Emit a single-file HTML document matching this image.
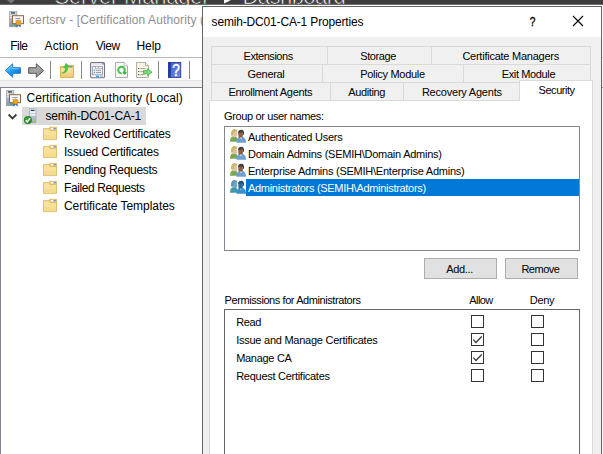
<!DOCTYPE html>
<html>
<head>
<meta charset="utf-8">
<title>semih-DC01-CA-1 Properties</title>
<style>
html,body{margin:0;padding:0;}
body{width:603px;height:454px;overflow:hidden;background:#fff;position:relative;font-family:"Liberation Sans",sans-serif;}
.a{position:absolute;}
.t{position:absolute;white-space:pre;font-family:"Liberation Sans",sans-serif;}
.tab{position:absolute;box-sizing:border-box;border:1px solid #d9d9d9;background:#f0f0f0;height:19px;}
.cb{position:absolute;box-sizing:border-box;width:13px;height:13px;border:1px solid #333;background:#fff;}
.btn{position:absolute;box-sizing:border-box;border:1px solid #adadad;background:#e1e1e1;}
.sep{position:absolute;width:1px;background:#8a8a8a;top:61px;height:18px;}
</style>
</head>
<body>
<!-- Server Manager dark header peeking at the top -->
<div class="a" style="left:0;top:0;width:603px;height:5px;background:#3e3e3e;overflow:hidden;">
  <span class="t" style="left:54.5px;top:-15.3px;font-size:22px;line-height:24px;color:#fff;-webkit-text-stroke:0.7px #3e3e3e;letter-spacing:-0.2px;">Server Manager</span>
  <svg class="a" style="left:224px;top:0" width="8" height="4" viewBox="0 0 8 4"><path d="M0 3.6L0 0L3 0L7 0.2Z" fill="#fff"/></svg>
  <span class="t" style="left:242.5px;top:-15.3px;font-size:22px;line-height:24px;color:#fff;-webkit-text-stroke:0.7px #3e3e3e;letter-spacing:-0.55px;">Dashboard</span>
  <svg class="a" style="left:7px;top:0" width="8" height="4" viewBox="0 0 8 4"><path d="M0 0H8L4 3.5Z" fill="#777"/></svg>
</div>
<div class="a" style="left:0;top:4px;width:603px;height:1px;background:#fff;opacity:.25"></div>

<!-- MMC window -->
<!-- title icon -->
<svg class="a" style="left:9px;top:11px" width="16" height="17" viewBox="0 0 16 17">
  <defs><linearGradient id="tw1" x1="0" y1="0" x2="0" y2="1"><stop offset="0" stop-color="#d3dce3"/><stop offset="1" stop-color="#8595a3"/></linearGradient></defs>
  <rect x="0.3" y="0.3" width="7.6" height="15.5" fill="url(#tw1)" stroke="#8f9dab" stroke-width=".6"/>
  <rect x="2" y="1.3" width="4" height="1.2" fill="#2e3a44"/>
  <rect x="1" y="4.4" width="6" height=".8" fill="#eef2f5"/>
  <rect x="1" y="6.4" width="2.5" height=".8" fill="#eef2f5"/>
  <rect x="5" y="13.2" width="2.2" height="2" fill="#35c035"/>
  <rect x="3.5" y="4.7" width="11" height="8" fill="#fbf8f0" stroke="#8a6840"/>
  <rect x="6.4" y="7.1" width="5" height=".8" fill="#6a7ee0"/><rect x="6.4" y="9" width="1.2" height=".7" fill="#8a9ae8"/>
  <path d="M7.8 13L7.2 16.4L9.4 15L9.5 13Z M11.2 13L12 16.4L9.8 15L9.6 13Z" fill="#2458d8"/>
  <circle cx="9.5" cy="11.5" r="2.6" fill="#eaa520" stroke="#c8860c" stroke-width=".6"/>
</svg>
<!-- menu bottom line -->
<div class="a" style="left:0;top:57px;width:603px;height:1px;background:#b9b9b9;"></div>
<!-- toolbar -->
<svg class="a" style="left:4px;top:62px" width="18" height="17" viewBox="0 0 18 17">
  <defs><linearGradient id="gb" x1="0" y1="0" x2="1" y2="1"><stop offset="0" stop-color="#7ad2ff"/><stop offset=".45" stop-color="#22a2f2"/><stop offset="1" stop-color="#0a5fc0"/></linearGradient></defs>
  <path d="M1.3 8.5L8.7 1.8V5.7H16.4V11.3H8.7V15.2Z" fill="url(#gb)" stroke="#2078cc" stroke-width="1" stroke-linejoin="round"/>
  <path d="M3.2 8.3L8 4V6.6H15.5" fill="none" stroke="#9ddcff" stroke-width=".8" opacity=".7"/>
</svg>
<svg class="a" style="left:27px;top:62px" width="18" height="17" viewBox="0 0 18 17">
  <defs><linearGradient id="gg" x1="0" y1="0" x2="1" y2="1"><stop offset="0" stop-color="#929292"/><stop offset=".5" stop-color="#a6a6a6"/><stop offset="1" stop-color="#868686"/></linearGradient></defs>
  <path d="M16.7 8.5L9.3 1.8V5.7H1.6V11.3H9.3V15.2Z" fill="url(#gg)" stroke="#585858" stroke-width="1" stroke-linejoin="round"/>
</svg>
<div class="sep" style="left:50px"></div>
<!-- up folder -->
<svg class="a" style="left:59px;top:62px" width="16" height="17" viewBox="0 0 16 17">
  <defs><linearGradient id="fu" x1="0" y1="0" x2="0" y2="1"><stop offset="0" stop-color="#fbe9a8"/><stop offset="1" stop-color="#ecc96f"/></linearGradient></defs>
  <path d="M1.5 4.6H8L9 3.6H14.5V15.4H1.5Z" fill="#eecb74" stroke="#cfa850" stroke-width=".9"/>
  <rect x="10.6" y="4.3" width="2.6" height="1.1" fill="#3a8ae8"/>
  <rect x="1.9" y="6.4" width="12.2" height="8.7" fill="url(#fu)"/>
  <path d="M2.8 11.2C5.6 10.4 6.6 8 6.6 5.6L4.6 6L7.2 1.2L10.4 4.6L8.8 4.9C9 8.6 6.6 11.6 2.8 11.2Z" fill="#40c640" stroke="#34ae34" stroke-width=".4"/>
</svg>
<div class="sep" style="left:81px"></div>
<!-- properties -->
<svg class="a" style="left:90px;top:62px" width="16" height="17" viewBox="0 0 16 17">
  <rect x="0.6" y="0.6" width="13.9" height="15.2" rx="1.2" fill="#f7f8fb" stroke="#6f7482" stroke-width="1.1"/>
  <rect x="1.2" y="1.2" width="12.7" height="1.9" fill="#e3e6ee"/>
  <rect x="2.5" y="4.6" width="10" height="8.2" fill="#eef0f6" stroke="#8f94a6" stroke-width=".8"/>
  <rect x="5.3" y="4.6" width="3.2" height="1.7" fill="#fff" stroke="#8f94a6" stroke-width=".6"/>
  <rect x="8.9" y="4.6" width="3.2" height="1.7" fill="#fff" stroke="#8f94a6" stroke-width=".6"/>
  <rect x="6" y="7.9" width="5" height=".9" fill="#8e93a6"/><rect x="6" y="10.1" width="5" height=".9" fill="#8e93a6"/>
  <rect x="3.8" y="7.6" width="1.3" height="1.3" fill="#1ea0f0"/><rect x="3.9" y="10" width="1.1" height="1.1" fill="#777"/>
  <rect x="6" y="13.6" width="3" height="1.5" fill="#20b0f0"/><rect x="10" y="13.6" width="3" height="1.5" fill="#b8bcc8"/>
  <rect x="12.2" y="1.2" width="1.4" height="1.2" fill="#3a5ab0"/>
</svg>
<!-- refresh -->
<svg class="a" style="left:115px;top:62px" width="14" height="17" viewBox="0 0 14 17">
  <path d="M0.5 0.5H9.2L12.5 3.8V15.5H0.5Z" fill="#fdfdfd" stroke="#a4a4a4" stroke-width=".9"/>
  <path d="M9.2 0.5V3.8H12.5" fill="#fff" stroke="#a4a4a4" stroke-width=".7"/>
  <circle cx="6.5" cy="8" r="3.3" fill="none" stroke="#48bf48" stroke-width="2"/>
  <path d="M6.4 8L7.6 12.6" stroke="#fdfdfd" stroke-width="1.1"/>
  <path d="M7.8 9.8L12 10.3L9.7 12.9Z" fill="#36b036"/>
</svg>
<!-- export list -->
<svg class="a" style="left:135px;top:62px" width="18" height="17" viewBox="0 0 18 17">
  <path d="M1.5 0.5H10.5L13.5 3.5V15.5H1.5Z" fill="#f8f4e0" stroke="#a8a8a0" stroke-width=".9"/>
  <path d="M10.5 0.5V3.5H13.5" fill="#fff" stroke="#9a9a90" stroke-width=".8"/>
  <rect x="3.2" y="6" width="1.1" height="1.1" fill="#444"/><rect x="5.5" y="6.3" width="5" height=".8" fill="#8484b8"/>
  <rect x="3.2" y="9" width="1.1" height="1.1" fill="#444"/><rect x="5.5" y="9.3" width="4" height=".8" fill="#8484b8"/>
  <rect x="3.2" y="12" width="1.1" height="1.1" fill="#444"/><rect x="5.5" y="12.3" width="4" height=".8" fill="#8484b8"/>
  <path d="M8.5 8.6H12.5V6.6L17 10.2L12.5 13.8V11.8H8.5Z" fill="#7ad87a" stroke="#3cb43c" stroke-width=".7"/>
</svg>
<div class="sep" style="left:158px"></div>
<!-- help -->
<svg class="a" style="left:168px;top:62px" width="14" height="16" viewBox="0 0 14 16">
  <defs><linearGradient id="gh" x1="0" y1="0" x2="1" y2="1"><stop offset="0" stop-color="#3a5ccc"/><stop offset="1" stop-color="#6f8ee6"/></linearGradient></defs>
  <rect x="0.4" y="0.4" width="12.4" height="15" fill="url(#gh)" stroke="#1c2f96" stroke-width=".8"/>
  <rect x="0.4" y="0.4" width="2.4" height="15" fill="#26399a"/>
  <text x="8" y="13.7" font-family="Liberation Sans, sans-serif" font-size="16.5" fill="#fff" stroke="#fff" stroke-width=".5" text-anchor="middle" transform="translate(8 0) scale(.82 1) translate(-8 0)">?</text>
</svg>
<div class="sep" style="left:189px"></div>
<!-- area below toolbar -->
<div class="a" style="left:0;top:80px;width:603px;height:7px;background:#f0f0f0;"></div>
<div class="a" style="left:0;top:80px;width:603px;height:1px;background:#e4e4e4;"></div>
<div class="a" style="left:0;top:87px;width:603px;height:1px;background:#7e838c;"></div>
<div class="a" style="left:0;top:87px;width:1px;height:380px;background:#7e838c;"></div>
<!-- tree selection -->
<div class="a" style="left:22px;top:107px;width:124px;height:18px;background:#d9d9d9;"></div>
<!-- tree icons -->
<svg class="a" style="left:6px;top:90px" width="16" height="17" viewBox="0 0 16 17">
  <defs><linearGradient id="tw2" x1="0" y1="0" x2="0" y2="1"><stop offset="0" stop-color="#d3dce3"/><stop offset="1" stop-color="#8595a3"/></linearGradient></defs>
  <rect x="0.3" y="0.3" width="7.6" height="15.5" fill="url(#tw2)" stroke="#8f9dab" stroke-width=".6"/>
  <rect x="2" y="1.3" width="4" height="1.2" fill="#2e3a44"/>
  <rect x="1" y="4.4" width="6" height=".8" fill="#eef2f5"/>
  <rect x="1" y="6.4" width="2.5" height=".8" fill="#eef2f5"/>
  <rect x="5" y="13.2" width="2.2" height="2" fill="#35c035"/>
  <rect x="3.5" y="4.7" width="11" height="8" fill="#fbf8f0" stroke="#8a6840"/>
  <rect x="6.4" y="7.1" width="5" height=".8" fill="#6a7ee0"/><rect x="6.4" y="9" width="1.2" height=".7" fill="#8a9ae8"/>
  <path d="M7.8 13L7.2 16.4L9.4 15L9.5 13Z M11.2 13L12 16.4L9.8 15L9.6 13Z" fill="#2458d8"/>
  <circle cx="9.5" cy="11.5" r="2.6" fill="#eaa520" stroke="#c8860c" stroke-width=".6"/>
</svg>
<svg class="a" style="left:7px;top:112px" width="11" height="9" viewBox="0 0 11 9"><path d="M1.6 2.5L5.5 6.4L9.4 2.5" fill="none" stroke="#3a3a3a" stroke-width="1.8"/></svg>
<svg class="a" style="left:23px;top:108px" width="15" height="17" viewBox="0 0 15 17">
  <defs><linearGradient id="sv" x1="0" y1="0" x2="0" y2="1"><stop offset="0" stop-color="#dfe6ec"/><stop offset="1" stop-color="#9aa8b6"/></linearGradient>
  <radialGradient id="gbl" cx=".45" cy=".4" r=".7"><stop offset="0" stop-color="#44b044"/><stop offset="1" stop-color="#146e14"/></radialGradient></defs>
  <rect x="6.6" y="0.9" width="6.4" height="13.8" fill="url(#sv)" stroke="#9aa6b2" stroke-width=".6"/>
  <rect x="7.8" y="1.9" width="3.6" height="1.1" fill="#2e3a44"/>
  <rect x="7.2" y="3.6" width="5.2" height="1.2" fill="#f7f9fb"/>
  <rect x="7.2" y="6.2" width="5.2" height="1.4" fill="#f7f9fb"/>
  <rect x="10.2" y="11.8" width="1.8" height="1.8" fill="#a8e020"/>
  <circle cx="4.9" cy="12.1" r="4" fill="url(#gbl)"/>
  <path d="M2.7 12.2L4.3 14L7.2 10.2" fill="none" stroke="#fff" stroke-width="1.4"/>
</svg>
<svg class="a" style="left:43px;top:126px" width="15" height="15" viewBox="0 0 15 15">
  <path d="M6.6 1.3H13.5V5H6.6Z" fill="#efcf78" stroke="#d8b45e" stroke-width=".8"/>
  <rect x="8" y="2" width="4.6" height="1.4" fill="#fff"/><rect x="10.6" y="2" width="2" height="1.4" fill="#3a8ae8"/>
  <path d="M0.5 2.6H6.2L7.2 4.6H13.5V13.6H0.5Z" fill="#f8e29a" stroke="#d8b45e" stroke-width=".8"/>
  <rect x="1" y="9" width="12" height="4.2" fill="#f4d986" opacity=".6"/>
</svg>
<svg class="a" style="left:43px;top:144px" width="15" height="15" viewBox="0 0 15 15">
  <path d="M6.6 1.3H13.5V5H6.6Z" fill="#efcf78" stroke="#d8b45e" stroke-width=".8"/>
  <rect x="8" y="2" width="4.6" height="1.4" fill="#fff"/><rect x="10.6" y="2" width="2" height="1.4" fill="#3a8ae8"/>
  <path d="M0.5 2.6H6.2L7.2 4.6H13.5V13.6H0.5Z" fill="#f8e29a" stroke="#d8b45e" stroke-width=".8"/>
  <rect x="1" y="9" width="12" height="4.2" fill="#f4d986" opacity=".6"/>
</svg>
<svg class="a" style="left:43px;top:162px" width="15" height="15" viewBox="0 0 15 15">
  <path d="M6.6 1.3H13.5V5H6.6Z" fill="#efcf78" stroke="#d8b45e" stroke-width=".8"/>
  <rect x="8" y="2" width="4.6" height="1.4" fill="#fff"/><rect x="10.6" y="2" width="2" height="1.4" fill="#3a8ae8"/>
  <path d="M0.5 2.6H6.2L7.2 4.6H13.5V13.6H0.5Z" fill="#f8e29a" stroke="#d8b45e" stroke-width=".8"/>
  <rect x="1" y="9" width="12" height="4.2" fill="#f4d986" opacity=".6"/>
</svg>
<svg class="a" style="left:43px;top:180px" width="15" height="15" viewBox="0 0 15 15">
  <path d="M6.6 1.3H13.5V5H6.6Z" fill="#efcf78" stroke="#d8b45e" stroke-width=".8"/>
  <rect x="8" y="2" width="4.6" height="1.4" fill="#fff"/><rect x="10.6" y="2" width="2" height="1.4" fill="#3a8ae8"/>
  <path d="M0.5 2.6H6.2L7.2 4.6H13.5V13.6H0.5Z" fill="#f8e29a" stroke="#d8b45e" stroke-width=".8"/>
  <rect x="1" y="9" width="12" height="4.2" fill="#f4d986" opacity=".6"/>
</svg>
<svg class="a" style="left:43px;top:198px" width="15" height="15" viewBox="0 0 15 15">
  <path d="M6.6 1.3H13.5V5H6.6Z" fill="#efcf78" stroke="#d8b45e" stroke-width=".8"/>
  <rect x="8" y="2" width="4.6" height="1.4" fill="#fff"/><rect x="10.6" y="2" width="2" height="1.4" fill="#3a8ae8"/>
  <path d="M0.5 2.6H6.2L7.2 4.6H13.5V13.6H0.5Z" fill="#f8e29a" stroke="#d8b45e" stroke-width=".8"/>
  <rect x="1" y="9" width="12" height="4.2" fill="#f4d986" opacity=".6"/>
</svg>
<span class="t" style="left:29.0px;top:11.84px;font-size:12px;line-height:16px;letter-spacing:0.121px;color:#8f8f8f;">certsrv - [Certification Authority (Local)\semih-DC01-CA-1]</span>
<span class="t" style="left:10.3px;top:37.84px;font-size:12px;line-height:16px;letter-spacing:-0.581px;color:#000;">File</span>
<span class="t" style="left:44.6px;top:37.84px;font-size:12px;line-height:16px;letter-spacing:0.088px;color:#000;">Action</span>
<span class="t" style="left:95.8px;top:37.84px;font-size:12px;line-height:16px;letter-spacing:-0.466px;color:#000;">View</span>
<span class="t" style="left:136.5px;top:37.84px;font-size:12px;line-height:16px;letter-spacing:-0.096px;color:#000;">Help</span>
<span class="t" style="left:26.5px;top:89.84px;font-size:12px;line-height:16px;letter-spacing:0.096px;color:#000;">Certification Authority (Local)</span>
<span class="t" style="left:45.4px;top:107.84px;font-size:12px;line-height:16px;letter-spacing:-0.152px;color:#000;">semih-DC01-CA-1</span>
<span class="t" style="left:64.0px;top:125.84px;font-size:12px;line-height:16px;letter-spacing:-0.206px;color:#000;">Revoked Certificates</span>
<span class="t" style="left:64.0px;top:143.84px;font-size:12px;line-height:16px;letter-spacing:-0.212px;color:#000;">Issued Certificates</span>
<span class="t" style="left:64.0px;top:161.84px;font-size:12px;line-height:16px;letter-spacing:-0.305px;color:#000;">Pending Requests</span>
<span class="t" style="left:64.0px;top:179.84px;font-size:12px;line-height:16px;letter-spacing:-0.408px;color:#000;">Failed Requests</span>
<span class="t" style="left:64.0px;top:197.84px;font-size:12px;line-height:16px;letter-spacing:-0.051px;color:#000;">Certificate Templates</span>

<!-- Dialog -->
<div class="a" style="left:202px;top:6px;width:400px;height:470px;box-sizing:border-box;border:1px solid #646464;background:#f0f0f0;"></div>
<div class="a" style="left:203px;top:7px;width:398px;height:30px;background:#fff;"></div>
<span class="t" style="left:211.6px;top:13.84px;font-size:12px;line-height:16px;letter-spacing:-0.166px;color:#000;">semih-DC01-CA-1 Properties</span>
<span class="t" style="left:529.1px;top:13.8px;font-size:13px;line-height:16px;color:#000;-webkit-text-stroke:0.35px #000;transform:scaleX(.78);transform-origin:50% 50%;">?</span>
<svg class="a" style="left:572px;top:15px" width="12" height="12" viewBox="0 0 12 12"><path d="M1 1L11 11M11 1L1 11" stroke="#000" stroke-width="1.1" fill="none"/></svg>

<!-- tabs -->
<div class="tab" style="left:211px;top:46px;width:117px;"></div>
<div class="tab" style="left:327px;top:46px;width:105px;"></div>
<div class="tab" style="left:431px;top:46px;width:160px;"></div>
<div class="tab" style="left:211px;top:64px;width:112px;"></div>
<div class="tab" style="left:322px;top:64px;width:142px;"></div>
<div class="tab" style="left:463px;top:64px;width:128px;"></div>
<div class="tab" style="left:211px;top:82px;width:120px;"></div>
<div class="tab" style="left:330px;top:82px;width:74px;"></div>
<div class="tab" style="left:403px;top:82px;width:117px;"></div>
<!-- pane -->
<div class="a" style="left:209px;top:100px;width:384px;height:380px;box-sizing:border-box;border:1px solid #d9d9d9;background:#fff;"></div>
<!-- selected tab -->
<div class="a" style="left:519px;top:80px;width:74px;height:21px;box-sizing:border-box;border:1px solid #d9d9d9;border-bottom:none;background:#fff;"></div>

<!-- list of users -->
<div class="a" style="left:224px;top:126px;width:356px;height:125px;box-sizing:border-box;border:1px solid #828790;background:#fff;"></div>
<div class="a" style="left:246px;top:179px;width:333px;height:17px;background:#0078d7;"></div>
<svg class="a" style="left:229px;top:129px" width="18" height="15" viewBox="0 0 18 15">
  <path d="M1 12.7C1 9 2.5 7.2 5 7.2C7.5 7.2 8.8 9 8.8 12.7Z" fill="#7aa655"/>
  <ellipse cx="5.8" cy="5.2" rx="2.4" ry="3" fill="#e4c0a6"/>
  <path d="M2.2 6.5C1.5 2 3.5 0 5.5 0C7.5 0 8.6 1.2 8.3 3C7 2.4 5.2 2.8 4.6 4.2C4.4 5.6 3.8 7.4 2.2 6.5Z" fill="#cbb86c"/>
  <path d="M7.5 13.7C7.5 10 9 7.6 12 7.6C15 7.6 17 10 17 13.7Z" fill="#6d9fd2"/>
  <ellipse cx="11.6" cy="5.8" rx="2.3" ry="3.2" fill="#8d5c3c"/>
  <path d="M9 4.5C8.8 1.8 10.5 0.8 12.2 0.8C14.5 0.8 15.4 2.6 15 5.8L14 5.8C14 4 13 3.2 11.4 3.4C10.2 3.5 9.6 4 9 4.5Z" fill="#3e3e3e"/>
  <path d="M11 8.6L12 10.4L13 8.6Z" fill="#e8eef6"/>
</svg>
<svg class="a" style="left:229px;top:146px" width="18" height="15" viewBox="0 0 18 15">
  <path d="M1 12.7C1 9 2.5 7.2 5 7.2C7.5 7.2 8.8 9 8.8 12.7Z" fill="#7aa655"/>
  <ellipse cx="5.8" cy="5.2" rx="2.4" ry="3" fill="#e4c0a6"/>
  <path d="M2.2 6.5C1.5 2 3.5 0 5.5 0C7.5 0 8.6 1.2 8.3 3C7 2.4 5.2 2.8 4.6 4.2C4.4 5.6 3.8 7.4 2.2 6.5Z" fill="#cbb86c"/>
  <path d="M7.5 13.7C7.5 10 9 7.6 12 7.6C15 7.6 17 10 17 13.7Z" fill="#6d9fd2"/>
  <ellipse cx="11.6" cy="5.8" rx="2.3" ry="3.2" fill="#8d5c3c"/>
  <path d="M9 4.5C8.8 1.8 10.5 0.8 12.2 0.8C14.5 0.8 15.4 2.6 15 5.8L14 5.8C14 4 13 3.2 11.4 3.4C10.2 3.5 9.6 4 9 4.5Z" fill="#3e3e3e"/>
  <path d="M11 8.6L12 10.4L13 8.6Z" fill="#e8eef6"/>
</svg>
<svg class="a" style="left:229px;top:163px" width="18" height="15" viewBox="0 0 18 15">
  <path d="M1 12.7C1 9 2.5 7.2 5 7.2C7.5 7.2 8.8 9 8.8 12.7Z" fill="#7aa655"/>
  <ellipse cx="5.8" cy="5.2" rx="2.4" ry="3" fill="#e4c0a6"/>
  <path d="M2.2 6.5C1.5 2 3.5 0 5.5 0C7.5 0 8.6 1.2 8.3 3C7 2.4 5.2 2.8 4.6 4.2C4.4 5.6 3.8 7.4 2.2 6.5Z" fill="#cbb86c"/>
  <path d="M7.5 13.7C7.5 10 9 7.6 12 7.6C15 7.6 17 10 17 13.7Z" fill="#6d9fd2"/>
  <ellipse cx="11.6" cy="5.8" rx="2.3" ry="3.2" fill="#8d5c3c"/>
  <path d="M9 4.5C8.8 1.8 10.5 0.8 12.2 0.8C14.5 0.8 15.4 2.6 15 5.8L14 5.8C14 4 13 3.2 11.4 3.4C10.2 3.5 9.6 4 9 4.5Z" fill="#3e3e3e"/>
  <path d="M11 8.6L12 10.4L13 8.6Z" fill="#e8eef6"/>
</svg>
<svg class="a" style="left:229px;top:180px" width="18" height="15" viewBox="0 0 18 15">
  <path d="M1 12.7C1 9 2.5 7.2 5 7.2C7.5 7.2 8.8 9 8.8 12.7Z" fill="#3f97a8"/>
  <ellipse cx="5.8" cy="5.2" rx="2.4" ry="3" fill="#6fa6c0"/>
  <path d="M2.2 6.5C1.5 2 3.5 0 5.5 0C7.5 0 8.6 1.2 8.3 3C7 2.4 5.2 2.8 4.6 4.2C4.4 5.6 3.8 7.4 2.2 6.5Z" fill="#5f97b0"/>
  <path d="M7.5 13.7C7.5 10 9 7.6 12 7.6C15 7.6 17 10 17 13.7Z" fill="#3a8ed0"/>
  <ellipse cx="11.6" cy="5.8" rx="2.3" ry="3.2" fill="#2a6898"/>
  <path d="M9 4.5C8.8 1.8 10.5 0.8 12.2 0.8C14.5 0.8 15.4 2.6 15 5.8L14 5.8C14 4 13 3.2 11.4 3.4C10.2 3.5 9.6 4 9 4.5Z" fill="#1f4f80"/>
  <path d="M11 8.6L12 10.4L13 8.6Z" fill="#9cc8e8"/>
</svg>

<div class="btn" style="left:424px;top:258px;width:73px;height:21px;"></div>
<div class="btn" style="left:505px;top:258px;width:73px;height:21px;"></div>

<!-- permissions list -->
<div class="a" style="left:224px;top:309px;width:356px;height:170px;box-sizing:border-box;border:1px solid #666;background:#fff;"></div>
<div class="cb" style="left:471px;top:315px"></div><div class="cb" style="left:531px;top:315px"></div>
<div class="cb" style="left:471px;top:333px"></div><div class="cb" style="left:531px;top:333px"></div>
<div class="cb" style="left:471px;top:351px"></div><div class="cb" style="left:531px;top:351px"></div>
<div class="cb" style="left:471px;top:369px"></div><div class="cb" style="left:531px;top:369px"></div>
<svg class="a" style="left:471px;top:333px" width="13" height="13" viewBox="0 0 13 13"><path d="M2.3 6.6L5 9.5L10.7 3.5" fill="none" stroke="#3a3a3a" stroke-width="1.3"/></svg>
<svg class="a" style="left:471px;top:351px" width="13" height="13" viewBox="0 0 13 13"><path d="M2.3 6.6L5 9.5L10.7 3.5" fill="none" stroke="#3a3a3a" stroke-width="1.3"/></svg>

<span class="t" style="left:243.5px;top:49.19px;font-size:11px;line-height:14px;letter-spacing:-0.457px;color:#000;">Extensions</span>
<span class="t" style="left:360.2px;top:49.19px;font-size:11px;line-height:14px;letter-spacing:-0.389px;color:#000;">Storage</span>
<span class="t" style="left:462.4px;top:49.19px;font-size:11px;line-height:14px;letter-spacing:-0.247px;color:#000;">Certificate Managers</span>
<span class="t" style="left:247.6px;top:67.19px;font-size:11px;line-height:14px;letter-spacing:-0.323px;color:#000;">General</span>
<span class="t" style="left:360.2px;top:67.19px;font-size:11px;line-height:14px;letter-spacing:-0.299px;color:#000;">Policy Module</span>
<span class="t" style="left:501.7px;top:67.19px;font-size:11px;line-height:14px;letter-spacing:-0.358px;color:#000;">Exit Module</span>
<span class="t" style="left:228.4px;top:85.19px;font-size:11px;line-height:14px;letter-spacing:-0.324px;color:#000;">Enrollment Agents</span>
<span class="t" style="left:348.2px;top:85.19px;font-size:11px;line-height:14px;letter-spacing:-0.367px;color:#000;">Auditing</span>
<span class="t" style="left:421.9px;top:85.19px;font-size:11px;line-height:14px;letter-spacing:-0.218px;color:#000;">Recovery Agents</span>
<span class="t" style="left:538.6px;top:83.19px;font-size:11px;line-height:14px;letter-spacing:-0.464px;color:#000;">Security</span>
<span class="t" style="left:224.0px;top:109.19px;font-size:11px;line-height:14px;letter-spacing:-0.368px;color:#000;">Group or user names:</span>
<span class="t" style="left:248.0px;top:130.19px;font-size:11px;line-height:14px;letter-spacing:-0.237px;color:#000;">Authenticated Users</span>
<span class="t" style="left:248.0px;top:147.19px;font-size:11px;line-height:14px;letter-spacing:-0.245px;color:#000;">Domain Admins (SEMIH\Domain Admins)</span>
<span class="t" style="left:248.0px;top:164.19px;font-size:11px;line-height:14px;letter-spacing:-0.241px;color:#000;">Enterprise Admins (SEMIH\Enterprise Admins)</span>
<span class="t" style="left:248.0px;top:181.19px;font-size:11px;line-height:14px;letter-spacing:-0.297px;color:#fff;">Administrators (SEMIH\Administrators)</span>
<span class="t" style="left:446.2px;top:262.19px;font-size:11px;line-height:14px;letter-spacing:-0.310px;color:#000;">Add...</span>
<span class="t" style="left:521.4px;top:262.19px;font-size:11px;line-height:14px;letter-spacing:-0.474px;color:#000;">Remove</span>
<span class="t" style="left:224.6px;top:293.19px;font-size:11px;line-height:14px;letter-spacing:-0.419px;color:#000;">Permissions for Administrators</span>
<span class="t" style="left:469.3px;top:293.19px;font-size:11px;line-height:14px;letter-spacing:-0.599px;color:#000;">Allow</span>
<span class="t" style="left:529.8px;top:293.19px;font-size:11px;line-height:14px;letter-spacing:-0.362px;color:#000;">Deny</span>
<span class="t" style="left:236.2px;top:315.19px;font-size:11px;line-height:14px;letter-spacing:-0.366px;color:#000;">Read</span>
<span class="t" style="left:236.2px;top:333.19px;font-size:11px;line-height:14px;letter-spacing:-0.250px;color:#000;">Issue and Manage Certificates</span>
<span class="t" style="left:236.2px;top:351.19px;font-size:11px;line-height:14px;letter-spacing:-0.299px;color:#000;">Manage CA</span>
<span class="t" style="left:236.2px;top:369.19px;font-size:11px;line-height:14px;letter-spacing:-0.276px;color:#000;">Request Certificates</span>
</body>
</html>
